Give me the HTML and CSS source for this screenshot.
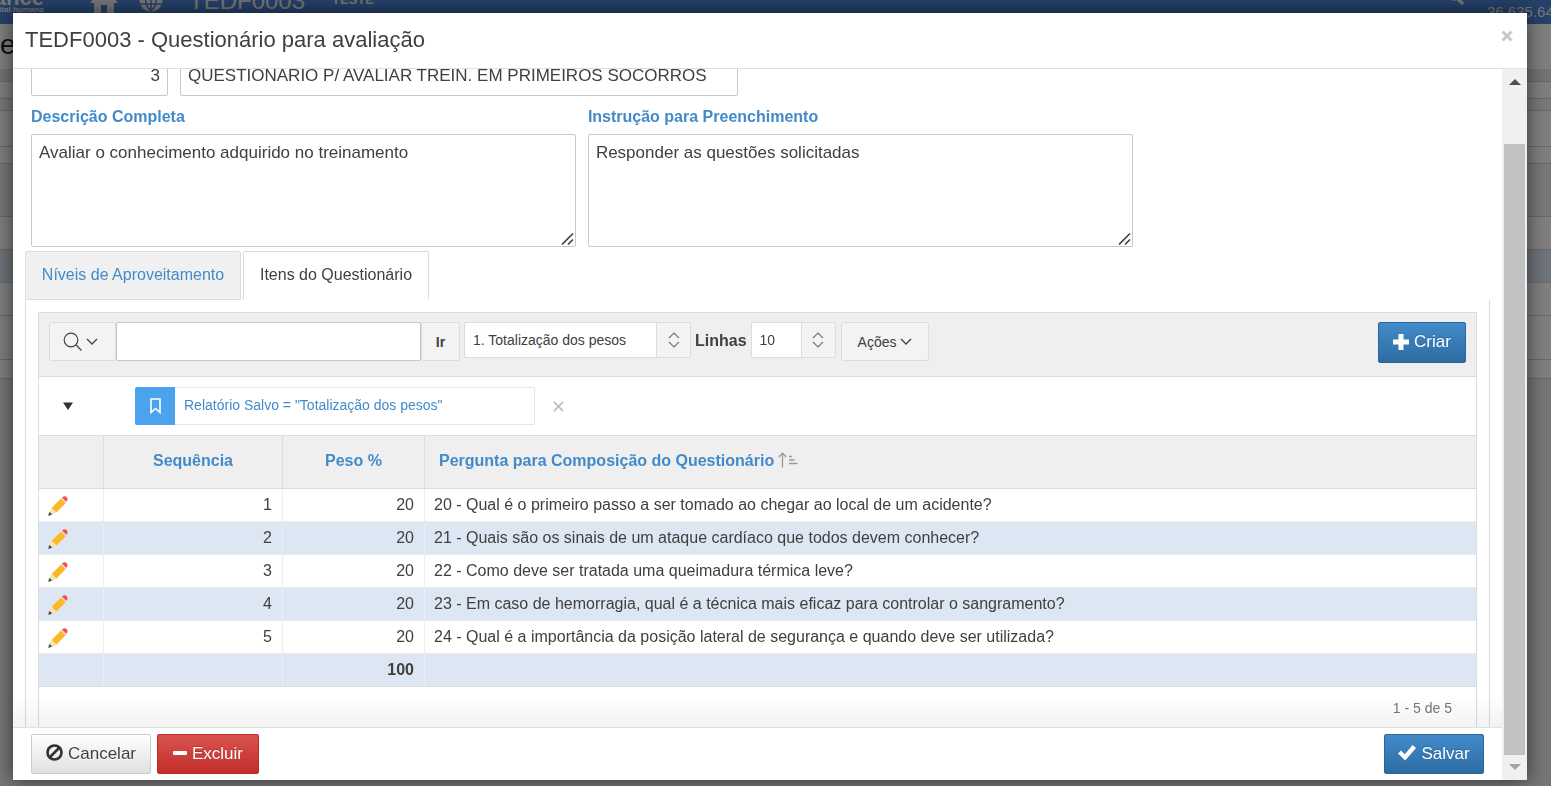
FILE: index.html
```html
<!DOCTYPE html>
<html lang="pt-BR">
<head>
<meta charset="utf-8">
<title>TEDF0003 - Questionário para avaliação</title>
<link rel="stylesheet" href="styles.css">
</head>
<body>
<svg class="defs" aria-hidden="true">
  <symbol id="pencil" viewBox="0 0 20 20">
    <path d="M.8 19.200l2-6.400 4.600 4.600z" fill="#ffe0a8"/>
    <path d="M2.800 12.800l1.200-1.200 4.600 4.600-1.200 1.200z" fill="#ffe0a8"/>
    <path d="M3.800 11.800L13 2.600l4.600 4.600-9.200 9.200z" fill="#fcb827"/>
    <path d="M13 2.600l1.300-1.300 4.600 4.600-1.300 1.300z" fill="#d5dbe0"/>
    <path d="M14.100 1.500l.5-.5c1.300-1.200 2.900-1 4 .1s1.300 2.700.1 4l-.4.600z" fill="#f44f43"/>
    <path d="M.6 19.400l1-3.100 2.100 2.100z" fill="#37475a" stroke="#37475a" stroke-width=".6"/>
  </symbol>
  <symbol id="chevron" viewBox="0 0 12 8"><path d="M1 1l5 5 5-5" fill="none" stroke="currentColor" stroke-width="1.300"/></symbol>
  <symbol id="updown" viewBox="0 0 12 16"><path d="M1 6l5-5 5 5M1 10l5 5 5-5" fill="none" stroke="currentColor" stroke-width="1.200"/></symbol>
  <symbol id="grip" viewBox="0 0 14 14"><path d="M1 12.500L12 1.500M7 12.500l5-5" fill="none" stroke="#444" stroke-width="1.700"/></symbol>
</svg>

<div class="page">
  <header class="page-bar">
    <div class="brand"><span class="brand-name">nance</span><span class="brand-sub">pital humano</span></div>
    <svg class="bar-home" viewBox="0 0 28 26"><path d="M14 0L0 16h4v10h7v-8h6v8h7V16h4z" fill="currentColor"/></svg>
    <svg class="bar-globe" viewBox="0 0 24 24"><circle cx="12" cy="12" r="11.500" fill="currentColor"/><path d="M12 0v24M1 8h22M1 16h22M12 1c-7 6-7 16 0 22M12 1c7 6 7 16 0 22" fill="none" stroke="#4a80d4" stroke-width="1.500"/></svg>
    <span class="bar-code">TEDF0003</span>
    <span class="bar-env">TESTE</span>
    <svg class="bar-search" viewBox="0 0 16 16"><path d="M9 9l5 5" stroke="currentColor" stroke-width="3.500" stroke-linecap="round"/><circle cx="6" cy="6" r="4.500" fill="none" stroke="currentColor" stroke-width="2.500"/></svg>
    <span class="bar-number">36.635.64</span>
  </header>
  <div class="page-title">e</div>
  <div class="strip strip-dark"></div>
  <div class="strip strip-a"></div>
  <div class="strip strip-b"></div>
  <div class="strip strip-c"></div>
  <div class="strip strip-d"></div>
  <div class="strip strip-e"></div>
  <div class="strip strip-row"></div>
  <div class="strip strip-row strip-alt"></div>
  <div class="strip strip-row"></div>
  <div class="strip strip-total"></div>
  <div class="strip strip-end"></div>
</div>

<div class="overlay">
  <section class="dialog" role="dialog" aria-labelledby="dialog-title">
    <header class="dialog-head">
      <h1 id="dialog-title">TEDF0003 - Questionário para avaliação</h1>
      <button class="close" type="button" aria-label="Fechar"><svg viewBox="0 0 12 12"><path d="M1.500 1.500l9 9M10.500 1.500l-9 9" stroke="currentColor" stroke-width="3"/></svg></button>
    </header>
    <div class="dialog-main">
      <div class="dialog-column">
        <div class="scroll-area">
          <div class="form-row">
            <input class="field field-code" type="text" value="3" aria-label="Código">
            <input class="field field-name" type="text" value="QUESTIONARIO P/ AVALIAR TREIN. EM PRIMEIROS SOCORROS" aria-label="Descrição">
          </div>
          <div class="form-row form-texts">
            <div class="text-group">
              <label for="descricao">Descrição Completa</label>
              <div class="text-wrap"><textarea id="descricao" class="field">Avaliar o conhecimento adquirido no treinamento</textarea><svg class="grip"><use href="#grip"/></svg></div>
            </div>
            <div class="text-group">
              <label for="instrucao">Instrução para Preenchimento</label>
              <div class="text-wrap"><textarea id="instrucao" class="field">Responder as questões solicitadas</textarea><svg class="grip"><use href="#grip"/></svg></div>
            </div>
          </div>

          <div class="tabs" role="tablist">
            <button class="tab" type="button" role="tab">Níveis de Aproveitamento</button>
            <button class="tab tab-active" type="button" role="tab" aria-selected="true">Itens do Questionário</button>
          </div>
          <div class="tab-panel">
            <div class="report">
              <div class="toolbar">
                <div class="search">
                  <button class="tool" type="button" aria-label="Selecionar colunas para pesquisa"><svg class="lens" viewBox="0 0 20 20"><circle cx="8" cy="8" r="6.800" fill="none" stroke="currentColor" stroke-width="1.200"/><path d="M13 13l5.500 5.500" stroke="currentColor" stroke-width="1.300"/></svg><svg class="chevron"><use href="#chevron"/></svg></button>
                  <input class="search-text" type="text" aria-label="Pesquisar">
                  <button class="tool go" type="button">Ir</button>
                </div>
                <div class="pick pick-report">
                  <select aria-label="Relatórios"><option>1. Totalização dos pesos</option></select>
                  <span class="pick-arrow"><svg><use href="#updown"/></svg></span>
                </div>
                <label class="rows-label" for="linhas">Linhas</label>
                <div class="pick pick-rows">
                  <select id="linhas"><option>10</option></select>
                  <span class="pick-arrow"><svg><use href="#updown"/></svg></span>
                </div>
                <button class="tool actions" type="button">Ações<svg class="chevron"><use href="#chevron"/></svg></button>
                <button class="btn btn-blue create" type="button"><svg class="icon-plus" viewBox="0 0 16 16"><path d="M5.500 0h5v5.500H16v5h-5.500V16h-5v-5.500H0v-5h5.500z" fill="currentColor"/></svg>Criar</button>
              </div>
              <div class="filters">
                <button class="toggle" type="button" aria-label="Recolher"><svg viewBox="0 0 10 8"><path d="M0 .5h10L5 8z" fill="#333"/></svg></button>
                <div class="chip">
                  <span class="chip-icon"><svg viewBox="0 0 11 16"><path d="M1 1h9v13.500L5.500 10.500 1 14.500z" fill="none" stroke="#fff" stroke-width="1.600"/></svg></span>
                  <a class="chip-text" href="#relatorio">Relatório Salvo = "Totalização dos pesos"</a>
                </div>
                <button class="chip-remove" type="button" aria-label="Remover"><svg viewBox="0 0 12 12"><path d="M1 1l10 10M11 1L1 11" stroke="currentColor" stroke-width="1.800"/></svg></button>
              </div>
              <table>
                <colgroup><col class="col-edit"><col class="col-seq"><col class="col-weight"><col></colgroup>
                <thead>
                  <tr><th></th><th><a href="#seq">Sequência</a></th><th><a href="#peso">Peso %</a></th><th class="question-head"><a href="#pergunta">Pergunta para Composição do Questionário</a><svg class="sort" viewBox="0 0 20 16"><path d="M4.500 15.500V1.500M.8 5l3.700-3.800L8.200 5M11 4.500h3M11 8h5.500M11 11.500h8.500" fill="none" stroke="currentColor" stroke-width="1.300"/></svg></th></tr>
                </thead>
                <tbody>
                  <tr><td><a class="edit" href="#1" aria-label="Editar"><svg><use href="#pencil"/></svg></a></td><td class="num">1</td><td class="num">20</td><td>20 - Qual é o primeiro passo a ser tomado ao chegar ao local de um acidente?</td></tr>
                  <tr><td><a class="edit" href="#2" aria-label="Editar"><svg><use href="#pencil"/></svg></a></td><td class="num">2</td><td class="num">20</td><td>21 - Quais são os sinais de um ataque cardíaco que todos devem conhecer?</td></tr>
                  <tr><td><a class="edit" href="#3" aria-label="Editar"><svg><use href="#pencil"/></svg></a></td><td class="num">3</td><td class="num">20</td><td>22 - Como deve ser tratada uma queimadura térmica leve?</td></tr>
                  <tr><td><a class="edit" href="#4" aria-label="Editar"><svg><use href="#pencil"/></svg></a></td><td class="num">4</td><td class="num">20</td><td>23 - Em caso de hemorragia, qual é a técnica mais eficaz para controlar o sangramento?</td></tr>
                  <tr><td><a class="edit" href="#5" aria-label="Editar"><svg><use href="#pencil"/></svg></a></td><td class="num">5</td><td class="num">20</td><td>24 - Qual é a importância da posição lateral de segurança e quando deve ser utilizada?</td></tr>
                  <tr class="total"><td></td><td></td><td class="num">100</td><td></td></tr>
                </tbody>
              </table>
              <div class="pagination">1 - 5 de 5</div>
            </div>
          </div>
        </div>
        <footer class="dialog-foot">
          <button class="btn btn-plain" type="button"><svg class="icon-ban" viewBox="0 0 18 18"><circle cx="9" cy="9" r="7.400" fill="none" stroke="currentColor" stroke-width="2.800"/><path d="M4 14L14 4" stroke="currentColor" stroke-width="2.800"/></svg>Cancelar</button>
          <button class="btn btn-red" type="button"><svg class="icon-minus" viewBox="0 0 14 16"><rect y="5" width="14" height="4" rx="1" fill="currentColor"/></svg>Excluir</button>
          <button class="btn btn-blue save" type="button"><svg class="icon-check" viewBox="0 0 18 16"><path d="M0 8.500l3-3 3.800 3.700L14.700 0 18 3 7.200 15.500z" fill="currentColor"/></svg>Salvar</button>
        </footer>
      </div>
      <div class="scrollbar" aria-hidden="true">
        <svg class="arrow arrow-up" viewBox="0 0 12 6"><path d="M6 0l6 6H0z" fill="#505050"/></svg>
        <div class="thumb"></div>
        <svg class="arrow arrow-down" viewBox="0 0 12 6"><path d="M6 6L0 0h12z" fill="#a3a3a3"/></svg>
      </div>
    </div>
  </section>
</div>
</body>
</html>
```
FILE: styles.css
```css
* { box-sizing: border-box; }
html, body { height: 100%; margin: 0; overflow: hidden; }
body, button, input, textarea, select {
  font-family: "Liberation Sans", Arial, sans-serif;
  font-size: 16px;
  color: #404040;
}
button { cursor: pointer; padding: 0; }
a { color: #428bca; text-decoration: none; }
svg { display: block; flex: none; }
.defs { position: absolute; width: 0; height: 0; }

/* Page behind the dialog */
.page { height: 100%; background: #ececee; overflow: hidden; }
.page-bar {
  display: flex;
  align-items: flex-end;
  height: 24px;
  background: #4a80d4;
  color: #ececec;
  white-space: nowrap;
}
.brand { display: flex; flex-direction: column; align-items: flex-end; width: 44px; margin-bottom: 10px; }
.brand-name { font-size: 22px; line-height: 16px; font-weight: 700; }
.brand-sub { font-size: 8px; line-height: 8px; font-weight: 700; }
.bar-home { width: 28px; height: 26px; margin-left: 46px; margin-bottom: 11px; }
.bar-globe { width: 24px; height: 24px; margin-left: 21px; margin-bottom: 12px; }
.bar-code { font-size: 24px; line-height: 28px; margin-left: 26px; margin-bottom: 9px; }
.bar-env { font-size: 13px; line-height: 16px; font-weight: 700; margin-left: 27px; margin-bottom: 16px; }
.bar-search { width: 16px; height: 16px; margin-left: auto; margin-bottom: 19px; }
.bar-number { width: 64px; margin-left: 23px; margin-bottom: 3px; font-size: 15px; line-height: 18px; }
.page-title { height: 45px; background: #fff; font-size: 28px; line-height: 42px; color: #222; }
.strip { border-bottom: 1px solid #d0d0d0; background: #fff; }
.strip-dark { height: 13px; background: #e6e6ec; }
.strip-a { height: 17px; }
.strip-b { height: 12px; background: #f0f0f0; }
.strip-c { height: 36px; }
.strip-d { height: 17px; }
.strip-e { height: 53px; background: #f0f0f0; }
.strip-row { height: 33px; }
.strip-alt { background: #dde8f4; }
.strip-total { height: 44px; }
.strip-end { height: 19px; }

/* Dialog */
.overlay { position: fixed; inset: 0; display: flex; padding: 13px 24px 6px 13px; background: rgba(0, 0, 0, .5); }
.dialog { flex: 1; min-width: 0; display: flex; flex-direction: column; background: #fff; box-shadow: 0 0 18px rgba(0, 0, 0, .6); }
.dialog-head { display: flex; justify-content: space-between; height: 56px; padding: 0 14px 0 12px; border-bottom: 1px solid #e0e0e0; }
.dialog-head h1 { margin: 0; font-size: 22px; line-height: 53px; font-weight: 400; }
.close { align-self: flex-start; margin-top: 17px; border: 0; background: none; color: #c8c8c8; }
.close svg { width: 12px; height: 12px; }
.dialog-main { flex: 1; min-height: 0; display: flex; }
.dialog-column { flex: 1; min-width: 0; display: flex; flex-direction: column; }
.scroll-area { position: relative; flex: 1; min-height: 0; display: flex; flex-direction: column; padding: 0 12px; overflow: hidden; }
.scroll-area::after {
  content: "";
  position: absolute;
  inset: auto 0 0;
  height: 32px;
  background: linear-gradient(rgba(0, 0, 0, 0), rgba(0, 0, 0, .05));
  pointer-events: none;
}
.form-row { display: flex; gap: 12px; padding: 0 6px; margin-top: -14px; }
.form-texts { margin-top: 11px; }
.field { border: 1px solid #c8c8c8; border-radius: 2px; padding: 8px 7px; background: #fff; font-size: 17px; }
.field-code { width: 137px; height: 41px; text-align: right; }
.field-name { width: 558px; height: 41px; }
.text-group { width: 37.5%; display: flex; flex-direction: column; gap: 7px; }
.text-group label { font-weight: 700; line-height: 20px; color: #428bca; }
.text-wrap { position: relative; }
.text-wrap textarea { display: block; width: 100%; height: 113px; line-height: 20px; resize: none; }
.grip { position: absolute; right: 1px; bottom: 1px; width: 14px; height: 14px; }

.tabs { display: flex; gap: 2px; margin-top: 4px; }
.tab { width: 216px; height: 49px; padding-bottom: 2px; border: 1px solid #dcdcdc; border-radius: 2px 2px 0 0; background: #f0f0f0; color: #428bca; }
.tab-active { width: 186px; border-bottom-color: #fff; background: #fff; color: #404040; }
.tab-panel { flex: 1; display: flex; padding: 12px 12px 0; border: solid #dcdcdc; border-width: 0 1px; }
.report { flex: 1; min-width: 0; border: 1px solid #dcdcdc; border-bottom: 0; }

.toolbar { display: flex; align-items: flex-start; height: 64px; padding: 9px 10px; background: #efefef; border-bottom: 1px solid #dcdcdc; }
.search { display: flex; width: 411px; }
.tool { display: flex; align-items: center; justify-content: center; height: 39px; background: #f3f3f3; border: 1px solid #dcdcdc; border-radius: 2px; font-size: 14px; }
.search .tool { width: 67px; padding-right: 4px; gap: 3px; }
.search .go { width: 39px; padding: 0; font-weight: 700; }
.search-text { flex: 1; min-width: 0; height: 39px; border: 1px solid #c8c8c8; border-radius: 2px; }
.lens { width: 20px; height: 20px; }
.chevron { width: 12px; height: 8px; }
.pick { display: grid; height: 36px; margin-left: 4px; }
.pick > * { grid-area: 1 / 1; }
.pick-report { width: 227px; }
.pick-rows { width: 85px; }
.pick select { appearance: none; width: 100%; padding: 0 36px 0 8px; border: 1px solid #dcdcdc; border-radius: 2px; background: #fff; font-size: 14px; }
.pick-arrow { justify-self: end; display: flex; align-items: center; justify-content: center; width: 35px; background: #f3f3f3; border: 1px solid #dcdcdc; border-radius: 0 2px 2px 0; color: #777; pointer-events: none; }
.pick-arrow svg { width: 12px; height: 16px; }
.rows-label { margin-left: 4px; line-height: 38px; font-weight: 700; }
.actions { width: 88px; margin-left: 5px; gap: 3px; }

.btn { display: flex; align-items: center; justify-content: center; gap: 5px; height: 40px; border: 1px solid; border-radius: 2px; font-size: 17px; }
.btn-blue { background: linear-gradient(#428bca, #2d6ca2); border-color: #2b669a; color: #fff; text-shadow: 0 -1px 0 rgba(0, 0, 0, .2); }
.btn-red { width: 102px; background: linear-gradient(#d9534f, #c12e2a); border-color: #b92c28; color: #fff; text-shadow: 0 -1px 0 rgba(0, 0, 0, .2); }
.btn-plain { width: 120px; background: linear-gradient(#fff, #e0e0e0); border-color: #ccc; text-shadow: 0 1px 0 #fff; }
.create { width: 88px; height: 41px; padding-bottom: 2px; margin-left: auto; }
.save { width: 100px; margin-left: auto; }
.icon-plus { width: 16px; height: 16px; }
.icon-ban { width: 17px; height: 17px; margin-bottom: 3px; color: #333; }
.icon-minus { width: 14px; height: 16px; }
.icon-check { width: 18px; height: 16px; margin-bottom: 2px; }

.filters { display: flex; align-items: center; height: 58px; padding-left: 24px; }
.toggle { border: 0; background: none; }
.toggle svg { width: 10px; height: 8px; }
.chip { display: flex; width: 400px; height: 38px; margin-left: 62px; border: 1px solid #e6e6e6; border-left: 0; border-radius: 2px; }
.chip-icon { display: flex; align-items: center; justify-content: center; width: 40px; margin: -1px 0; background: #4aa3ec; border-radius: 2px 0 0 2px; }
.chip-icon svg { width: 11px; height: 16px; }
.chip-text { padding-left: 9px; font-size: 14px; line-height: 35px; }
.chip-remove { margin-left: 18px; border: 0; background: none; color: #bbb; }
.chip-remove svg { width: 11px; height: 11px; }

table { width: 100%; border-collapse: separate; border-spacing: 0; table-layout: fixed; }
.col-edit { width: 65px; }
.col-seq { width: 179px; }
.col-weight { width: 142px; }
th { height: 54px; padding: 0 0 2px; background: #efefef; border: solid #dcdcdc; border-width: 1px 1px 1px 0; }
td { height: 33px; padding: 0 10px 0 9px; border-right: 1px solid #ececec; border-bottom: 1px solid #ececec; }
th:last-child, td:last-child { border-right: 0; }
.question-head { padding-left: 14px; text-align: left; }
.sort { display: inline-block; width: 20px; height: 16px; margin-left: 4px; vertical-align: -2px; color: #999; }
tbody tr:nth-child(even) { background: #dde7f3; }
.total td { border-bottom-color: #dcdcdc; font-weight: 700; }
.num { text-align: right; }
.edit svg { width: 20px; height: 20px; margin-top: 2px; }
.pagination { padding: 12px 24px 12px; text-align: right; font-size: 14px; line-height: 18px; color: #777; }

.dialog-foot { display: flex; gap: 6px; height: 53px; padding: 6px 18px; border-top: 1px solid #e0e0e0; }

.scrollbar { display: flex; flex-direction: column; align-items: center; width: 25px; background: #f0f0f0; }
.arrow { width: 12px; height: 6px; }
.arrow-up { margin: 10px 0 59px; }
.thumb { flex: 1; width: 21px; background: #c1c1c1; }
.arrow-down { margin: 9px 0 10px; }
```
